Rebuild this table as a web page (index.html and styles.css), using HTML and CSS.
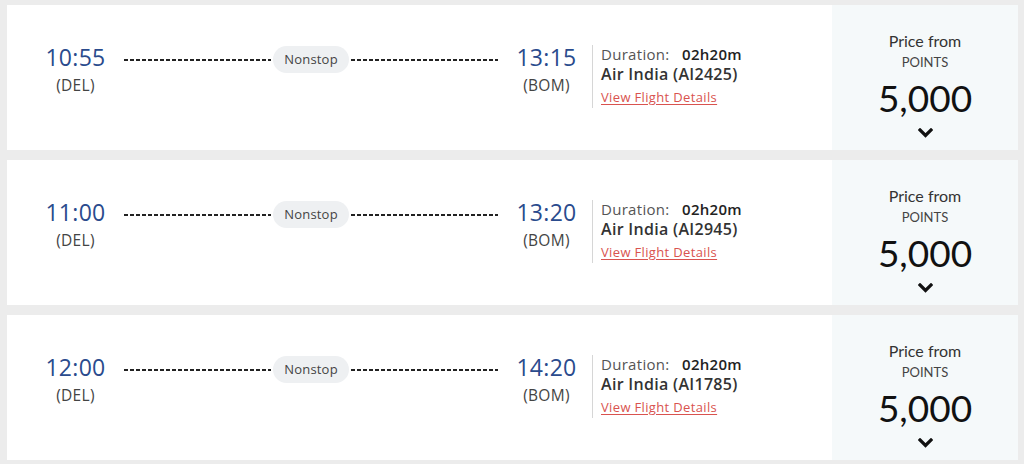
FILE: index.html
```html
<!DOCTYPE html>
<html>
<head>
<meta charset="utf-8">
<link rel="stylesheet" href="styles.css">
</head>
<body>
<div class="list">
  <div class="card">
    <div class="main">
      <div class="stop">
        <div class="time">10:55</div>
        <div class="code">(DEL)</div>
      </div>
      <div class="route">
        <span class="dash"></span>
        <span class="pill">Nonstop</span>
        <span class="dash"></span>
      </div>
      <div class="stop">
        <div class="time">13:15</div>
        <div class="code">(BOM)</div>
      </div>
      <div class="sep"></div>
      <div class="info">
        <div class="dur"><span class="dur-label">Duration:</span><span class="dur-val">02h20m</span></div>
        <div class="airline">Air India (AI2425)</div>
        <a class="details" href="#">View Flight Details</a>
      </div>
    </div>
    <div class="price">
      <div class="from">Price from</div>
      <div class="unit">POINTS</div>
      <div class="amount">5,000</div>
      <svg class="chev" width="15" height="10" viewBox="0 0 15 10"><polyline points="2,2 7.5,7.5 13,2" fill="none" stroke="#111" stroke-width="3.2" stroke-linecap="square"/></svg>
    </div>
  </div>
  <div class="card">
    <div class="main">
      <div class="stop">
        <div class="time">11:00</div>
        <div class="code">(DEL)</div>
      </div>
      <div class="route">
        <span class="dash"></span>
        <span class="pill">Nonstop</span>
        <span class="dash"></span>
      </div>
      <div class="stop">
        <div class="time">13:20</div>
        <div class="code">(BOM)</div>
      </div>
      <div class="sep"></div>
      <div class="info">
        <div class="dur"><span class="dur-label">Duration:</span><span class="dur-val">02h20m</span></div>
        <div class="airline">Air India (AI2945)</div>
        <a class="details" href="#">View Flight Details</a>
      </div>
    </div>
    <div class="price">
      <div class="from">Price from</div>
      <div class="unit">POINTS</div>
      <div class="amount">5,000</div>
      <svg class="chev" width="15" height="10" viewBox="0 0 15 10"><polyline points="2,2 7.5,7.5 13,2" fill="none" stroke="#111" stroke-width="3.2" stroke-linecap="square"/></svg>
    </div>
  </div>
  <div class="card">
    <div class="main">
      <div class="stop">
        <div class="time">12:00</div>
        <div class="code">(DEL)</div>
      </div>
      <div class="route">
        <span class="dash"></span>
        <span class="pill">Nonstop</span>
        <span class="dash"></span>
      </div>
      <div class="stop">
        <div class="time">14:20</div>
        <div class="code">(BOM)</div>
      </div>
      <div class="sep"></div>
      <div class="info">
        <div class="dur"><span class="dur-label">Duration:</span><span class="dur-val">02h20m</span></div>
        <div class="airline">Air India (AI1785)</div>
        <a class="details" href="#">View Flight Details</a>
      </div>
    </div>
    <div class="price">
      <div class="from">Price from</div>
      <div class="unit">POINTS</div>
      <div class="amount">5,000</div>
      <svg class="chev" width="15" height="10" viewBox="0 0 15 10"><polyline points="2,2 7.5,7.5 13,2" fill="none" stroke="#111" stroke-width="3.2" stroke-linecap="square"/></svg>
    </div>
  </div>
</div>
</body>
</html>
```

FILE: styles.css
```css
html, body {
  margin: 0;
  padding: 0;
  background: #ececec;
}
body {
  font-family: "Open Sans", "Liberation Sans", sans-serif;
  color: #333;
}
.list {
  display: flex;
  flex-direction: column;
  gap: 10px;
  padding: 5px 6px 4px 7px;
}
.card {
  display: flex;
  height: 145px;
  background: #fff;
}
.main {
  flex: 1;
  display: flex;
  align-items: flex-start;
  padding: 38px 0 0 38px;
}
.stop {
  text-align: center;
  min-width: 61px;
}
.time {
  font-size: 23px;
  line-height: 28px;
  color: #2a4b8d;
  letter-spacing: 0.3px;
}
.code {
  font-size: 15.5px;
  line-height: 22px;
  color: #444;
  margin-top: 3px;
  letter-spacing: 0.3px;
}
.route {
  display: flex;
  align-items: center;
  width: 374px;
  margin: 3px 18px 0 18px;
}
.dash {
  flex: 1;
  height: 2px;
  background: repeating-linear-gradient(90deg, #222 0 4px, transparent 4px 6px);
}
.pill {
  height: 27px;
  line-height: 27px;
  padding: 0 11px;
  margin: 0 2px;
  border-radius: 14px;
  background: #eef0f2;
  font-size: 13px;
  color: #444;
  letter-spacing: 0.2px;
}
.sep {
  width: 1px;
  height: 63px;
  background: #d6d6d6;
  margin: 2px 8px 0 15px;
}
.info {
  display: flex;
  flex-direction: column;
  padding-top: 1px;
}
.dur {
  font-size: 15px;
  line-height: 20px;
  letter-spacing: 0.3px;
}
.dur-label {
  color: #555;
  display: inline-block;
  width: 81px;
}
.dur-val {
  color: #222;
  font-weight: 600;
}
.airline {
  font-size: 16px;
  line-height: 20px;
  font-weight: 600;
  color: #333;
  letter-spacing: 0.3px;
}
.details {
  font-size: 13px;
  line-height: 20px;
  margin-top: 3px;
  color: #d9534f;
  text-decoration: underline;
  text-underline-offset: 2px;
  letter-spacing: 0.35px;
}
.price {
  width: 186px;
  background: #f5f9fa;
  display: flex;
  flex-direction: column;
  align-items: center;
  padding-top: 26px;
  font-family: Lato, "Open Sans", sans-serif;
  box-sizing: border-box;
}
.from {
  font-size: 16px;
  line-height: 20px;
  color: #333;
}
.unit {
  font-size: 13px;
  line-height: 20px;
  color: #444;
  margin-top: 1px;
}
.amount {
  font-size: 37px;
  line-height: 44px;
  color: #111;
  margin-top: 4px;
}
.chev {
  display: block;
  margin-top: 8px;
}
```
